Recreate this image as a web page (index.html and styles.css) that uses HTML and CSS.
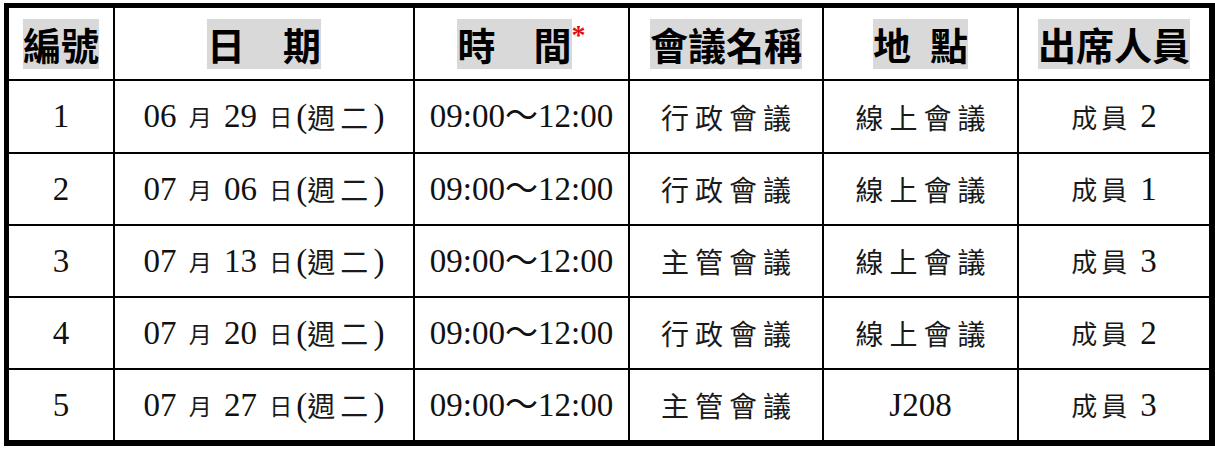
FILE: index.html
```html
<!DOCTYPE html>
<html lang="zh-Hant">
<head>
<meta charset="utf-8">
<title>會議時程</title>
<link rel="stylesheet" href="styles.css">
</head>
<body>
<div class="sheet">
  <div class="grid">
    <div class="cell head"><span class="hl">編號</span></div>
    <div class="cell head"><span class="hl">日　期</span></div>
    <div class="cell head"><span class="hl">時　間</span><span class="req">*</span></div>
    <div class="cell head"><span class="hl">會議名稱</span></div>
    <div class="cell head"><span class="hl">地&#8194;點</span></div>
    <div class="cell head"><span class="hl">出席人員</span></div>

    <div class="cell">1</div>
    <div class="cell">06 <span class="zh s">月</span> 29 <span class="zh s">日</span>(<span class="zh w">週二</span>)</div>
    <div class="cell">09:00～12:00</div>
    <div class="cell"><span class="zh">行政會議</span></div>
    <div class="cell"><span class="zh">線上會議</span></div>
    <div class="cell"><span class="zh n">成員</span>2</div>

    <div class="cell">2</div>
    <div class="cell">07 <span class="zh s">月</span> 06 <span class="zh s">日</span>(<span class="zh w">週二</span>)</div>
    <div class="cell">09:00～12:00</div>
    <div class="cell"><span class="zh">行政會議</span></div>
    <div class="cell"><span class="zh">線上會議</span></div>
    <div class="cell"><span class="zh n">成員</span>1</div>

    <div class="cell">3</div>
    <div class="cell">07 <span class="zh s">月</span> 13 <span class="zh s">日</span>(<span class="zh w">週二</span>)</div>
    <div class="cell">09:00～12:00</div>
    <div class="cell"><span class="zh">主管會議</span></div>
    <div class="cell"><span class="zh">線上會議</span></div>
    <div class="cell"><span class="zh n">成員</span>3</div>

    <div class="cell">4</div>
    <div class="cell">07 <span class="zh s">月</span> 20 <span class="zh s">日</span>(<span class="zh w">週二</span>)</div>
    <div class="cell">09:00～12:00</div>
    <div class="cell"><span class="zh">行政會議</span></div>
    <div class="cell"><span class="zh">線上會議</span></div>
    <div class="cell"><span class="zh n">成員</span>2</div>

    <div class="cell">5</div>
    <div class="cell">07 <span class="zh s">月</span> 27 <span class="zh s">日</span>(<span class="zh w">週二</span>)</div>
    <div class="cell">09:00～12:00</div>
    <div class="cell"><span class="zh">主管會議</span></div>
    <div class="cell">J208</div>
    <div class="cell"><span class="zh n">成員</span>3</div>
  </div>
</div>
</body>
</html>
```
FILE: styles.css
```css
html, body {
  margin: 0;
  padding: 0;
  background: #ffffff;
}

body {
  font-family: "Liberation Serif", "Noto Sans CJK TC", serif;
  color: #111111;
}

.sheet {
  padding: 3px 0 0 4px;
}

.grid {
  width: 1211px;
  box-sizing: border-box;
  display: grid;
  grid-template-columns: 104px 298px 213px 192px 193px 190px;
  grid-template-rows: 71px 71px 70px 70px 70px 70px;
  gap: 2px;
  padding: 5px 6px 6px 5px;
  background: #000000;
}

.cell {
  background: #ffffff;
  display: flex;
  align-items: center;
  justify-content: center;
  font-size: 33px;
  white-space: pre;
  line-height: 1;
}

.head {
  font-family: "Noto Sans CJK TC", sans-serif;
  font-weight: 700;
  color: #000000;
}

.hl {
  display: inline-block;
  background: #d9d9d9;
  font-size: 38px;
  line-height: 50px;
  height: 50px;
}

.req {
  align-self: flex-start;
  margin-top: 13px;
  font-family: "Liberation Serif", serif;
  font-weight: 700;
  font-size: 28px;
  line-height: 28px;
  color: #e01010;
}

.zh {
  font-family: "Noto Sans CJK TC", sans-serif;
  font-size: 28px;
  letter-spacing: 6px;
  margin-right: -6px;
  color: #1a1a1a;
}

.zh.w {
  letter-spacing: 5px;
  margin-right: 0;
}

.zh.s {
  font-size: 23px;
  letter-spacing: 0;
  margin: 0 4px;
}

.zh.n {
  font-size: 26px;
  letter-spacing: 4px;
  margin-right: 9px;
}
```
